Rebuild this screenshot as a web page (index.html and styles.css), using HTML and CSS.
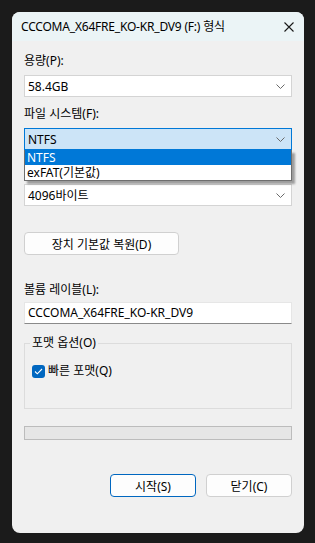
FILE: index.html
```
<!DOCTYPE html>
<html lang="ko">
<head>
    <meta charset="utf-8">
    <title>형식</title>
    <link rel="stylesheet" href="styles.css">
</head>
<body>
    <div class="window">
        <div class="titlebar">
            <span class="title">CCCOMA_X64FRE_KO-KR_DV9 (F:) 형식</span>
            <svg class="close" width="10" height="10" viewBox="0 0 10 10">
                <path d="M0.5 0.5L9.5 9.5M9.5 0.5L0.5 9.5" stroke="#1a1a1a" stroke-width="1.1" fill="none"/>
            </svg>
        </div>

        <div class="content">
            <div class="label first">용량(P):</div>
            <div class="combo">
                <span>58.4GB</span>
                <svg class="chev" width="9" height="5" viewBox="0 0 9 5"><path d="M0.5 0.5L4.5 4.5L8.5 0.5" stroke="#6a6a6a" fill="none"/></svg>
            </div>

            <div class="label second">파일 시스템(F):</div>
            <div class="combo-wrap">
                <div class="combo focused">
                    <span>NTFS</span>
                    <svg class="chev" width="9" height="5" viewBox="0 0 9 5"><path d="M0.5 0.5L4.5 4.5L8.5 0.5" stroke="#6a6a6a" fill="none"/></svg>
                </div>
                <ul class="droplist">
                    <li class="selected">NTFS</li>
                    <li>exFAT(기본값)</li>
                </ul>
            </div>

            <!-- covered by the open list -->
            <div class="label third"></div>
            <div class="combo">
                <span>4096바이트</span>
                <svg class="chev" width="9" height="5" viewBox="0 0 9 5"><path d="M0.5 0.5L4.5 4.5L8.5 0.5" stroke="#6a6a6a" fill="none"/></svg>
            </div>

            <button class="btn restore">장치 기본값 복원(D)</button>

            <div class="label fourth">볼륨 레이블(L):</div>
            <div class="textbox">CCCOMA_X64FRE_KO-KR_DV9</div>

            <fieldset class="group">
                <legend>포맷 옵션(O)</legend>
                <label class="check">
                    <span class="box">
                        <svg width="9" height="7" viewBox="0 0 9 7"><path d="M1 3.5L3.3 5.8L8 1" stroke="#fff" stroke-width="1.1" fill="none"/></svg>
                    </span>
                    빠른 포맷(Q)
                </label>
            </fieldset>

            <div class="progress"></div>

            <div class="actions">
                <button class="btn primary">시작(S)</button>
                <button class="btn">닫기(C)</button>
            </div>
        </div>
    </div>
</body>
</html>
```

FILE: styles.css
```
body{
    margin:0;
    background:#1b1b1b;
    font-family: "Noto Sans", "Noto Sans CJK KR", sans-serif;
    font-size:12px;
    color:#000;
}
.window{
    width:292px;
    height:521px;
    margin:12px 0 0 12px;
    background:#f0f0f0;
    border-radius:8px;
    overflow:hidden;
}
.titlebar{
    height:29px;
    background:#ebf4f6;
    display:flex;
    align-items:center;
    justify-content:space-between;
    padding:0 10px 0 9px;
}
.title{
    line-height:16px;
    margin-top:1px;
    letter-spacing:-0.2px;
}
.close{
    margin-top:1px;
}
.content{
    padding:0 12px;
    display:flex;
    flex-direction:column;
}
.label{
    height:16px;
    line-height:16px;
    margin-bottom:6px;
}
.label.first{ margin-top:12px; }
.label.second{ margin-top:9px; }
.label.third{ margin-top:12px; }
.label.fourth{ margin-top:27px; margin-bottom:4px; }

.combo{
    height:22px;
    box-sizing:border-box;
    background:#fff;
    border:1px solid #d4d4d4;
    display:flex;
    align-items:center;
    justify-content:space-between;
    padding:0 6px 0 3px;
}
.combo.focused{
    background:#cce4f7;
    border-color:#0078d7;
}
.combo-wrap{
    position:relative;
}
.droplist{
    position:absolute;
    top:100%;
    left:0;
    right:0;
    margin:0;
    padding:0;
    list-style:none;
    background:#fff;
    border:1px solid #6e6e6e;
    border-top:none;
    box-shadow:3px 3px 2px rgba(0,0,0,0.35);
    z-index:2;
}
.droplist li{
    height:15px;
    line-height:15px;
    padding-left:2px;
}
.droplist li.selected{
    background:#0078d7;
    color:#fff;
}
.btn{
    font-family:inherit;
    font-size:12px;
    height:23px;
    background:#fdfdfd;
    border:1px solid #d0d0d0;
    border-radius:4px;
    color:#000;
    padding:0;
}
.btn.restore{
    width:155px;
    margin-top:26px;
    align-self:flex-start;
}
.textbox{
    height:22px;
    box-sizing:border-box;
    background:#fff;
    border:1px solid #e6e6e6;
    border-bottom-color:#8a8a8a;
    line-height:20px;
    padding-left:3px;
}
.group{
    margin:11px 0 0 0;
    padding:0 6px 0 5px;
    border:1px solid #dcdcdc;
    height:74px;
    box-sizing:border-box;
}
.group legend{
    padding:0 2px;
    line-height:16px;
}
.check{
    display:flex;
    align-items:center;
    gap:3px;
    margin-top:12px;
    margin-left:2px;
    line-height:16px;
}
.box{
    width:13px;
    height:13px;
    border-radius:3px;
    background:#0067c0;
    display:flex;
    align-items:center;
    justify-content:center;
}
.progress{
    margin-top:17px;
    height:14px;
    box-sizing:border-box;
    background:#e6e6e6;
    border:1px solid #bcbcbc;
}
.actions{
    margin-top:34px;
    display:flex;
    justify-content:flex-end;
    gap:10px;
}
.actions .btn{
    width:86px;
}
.btn.primary{
    border-color:#0067c0;
}
```
